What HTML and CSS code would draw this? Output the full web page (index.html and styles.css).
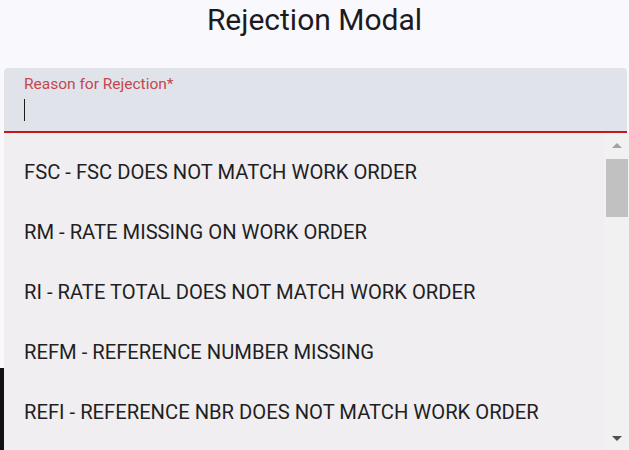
FILE: index.html
```html
<!DOCTYPE html>
<html>
<head>
<meta charset="utf-8">
<link rel="stylesheet" href="styles.css">
</head>
<body>
<div class="page">
  <h1 class="title">Rejection Modal</h1>
  <div class="field">
    <label class="label">Reason for Rejection*</label>
    <div class="input"><span class="caret"></span></div>
  </div>
  <div class="panel">
    <ul class="options">
      <li class="option">FSC - FSC DOES NOT MATCH WORK ORDER</li>
      <li class="option">RM - RATE MISSING ON WORK ORDER</li>
      <li class="option">RI - RATE TOTAL DOES NOT MATCH WORK ORDER</li>
      <li class="option">REFM - REFERENCE NUMBER MISSING</li>
      <li class="option">REFI - REFERENCE NBR DOES NOT MATCH WORK ORDER</li>
    </ul>
    <div class="scrollbar">
      <div class="arrow up"></div>
      <div class="thumb"></div>
      <div class="track"></div>
      <div class="arrow down"></div>
    </div>
  </div>
  <div class="backdrop-edge"></div>
</div>
</body>
</html>
```
FILE: styles.css
```css
html, body {
  margin: 0;
  padding: 0;
  width: 629px;
  height: 450px;
  overflow: hidden;
  background: #f9f8fd;
  font-family: Roboto, "Liberation Sans", sans-serif;
}
.page {
  position: relative;
  height: 450px;
  display: flex;
  flex-direction: column;
}
.title {
  margin: 0;
  height: 68px;
  padding-top: 1px;
  box-sizing: border-box;
  text-align: center;
  font-weight: 400;
  font-size: 30px;
  line-height: 38px;
  color: #1b1b1f;
}
.field {
  margin: 0 2px 0 4px;
  height: 65px;
  box-sizing: border-box;
  background: #e1e3eb;
  border-radius: 4px 4px 0 0;
  border-bottom: 2px solid #c8161d;
  padding: 7px 20px 0 20px;
}
.label {
  display: block;
  font-size: 15.5px;
  line-height: 18px;
  color: #c4474c;
}
.input {
  height: 30px;
  display: flex;
  align-items: center;
}
.caret {
  display: block;
  width: 1px;
  height: 22px;
  background: #1b1b1f;
  margin-top: 4px;
}
.panel {
  margin-left: 4px;
  flex: 1;
  display: flex;
  background: #f0eef0;
  min-height: 0;
}
.options {
  list-style: none;
  margin: 0;
  padding: 9px 0 0 0;
  flex: 1;
}
.option {
  height: 60px;
  display: flex;
  align-items: center;
  padding-left: 20px;
  font-size: 20.2px;
  color: #1f1f24;
}
.scrollbar {
  width: 25px;
  background: #f1f1f1;
  display: flex;
  flex-direction: column;
  align-items: center;
}
.arrow {
  width: 0;
  height: 0;
  border-left: 5px solid transparent;
  border-right: 5px solid transparent;
}
.arrow.up {
  margin-top: 10px;
  border-bottom: 5px solid #a3a3a3;
}
.thumb {
  margin-top: 11px;
  width: 22px;
  height: 58px;
  background: #c1c1c1;
}
.track {
  flex: 1;
}
.arrow.down {
  margin-bottom: 9px;
  border-top: 5px solid #505050;
}
.backdrop-edge {
  position: absolute;
  left: 0;
  top: 368px;
  width: 4px;
  height: 82px;
  background: #111;
}
```
